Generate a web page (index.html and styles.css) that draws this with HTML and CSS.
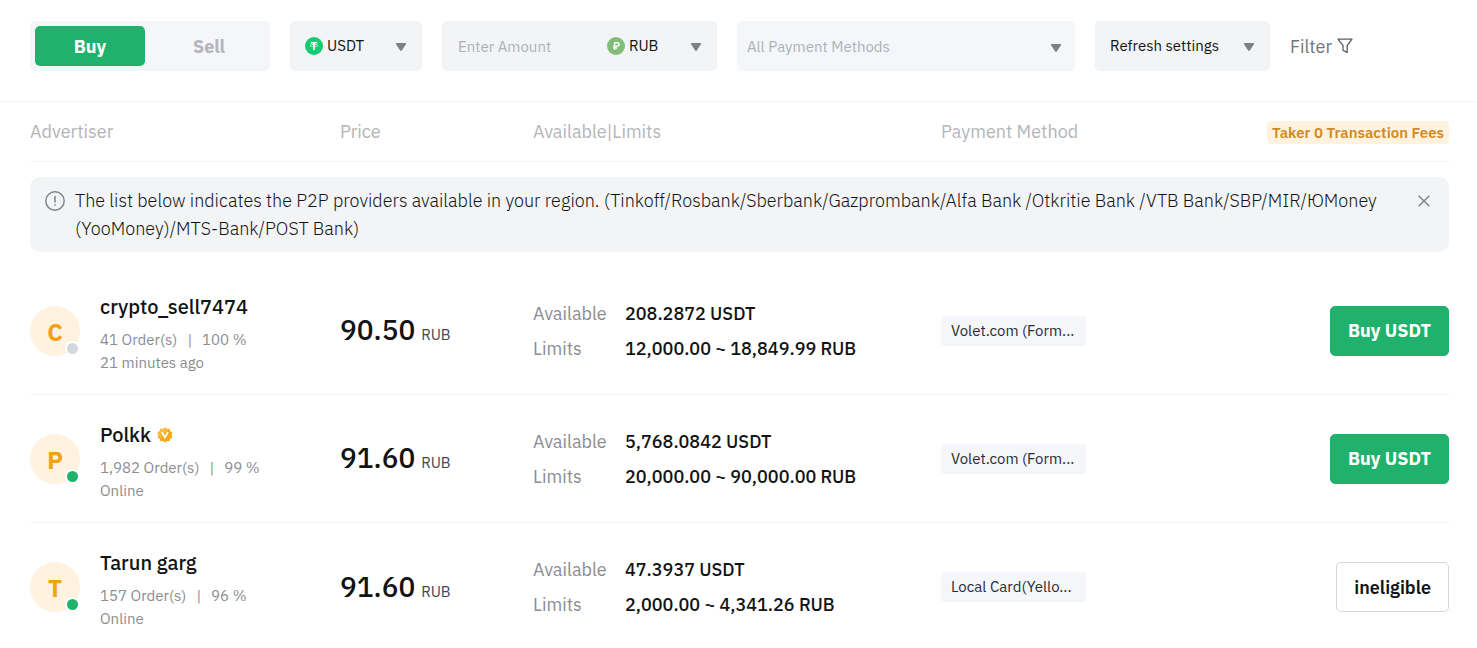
FILE: index.html
```html
<!DOCTYPE html>
<html lang="en">
<head>
<meta charset="utf-8">
<meta name="viewport" content="width=device-width, initial-scale=1">
<title>P2P Trading</title>
<link rel="stylesheet" href="styles.css">
</head>
<body>
<svg class="defs" aria-hidden="true">
  <symbol id="caret" viewBox="0 0 12 10"><path d="M1.8 1h8.4q1.400 0 .7 1.200L7 8.200q-1 1.400-2 0L1.100 2.200Q.4 1 1.800 1z" fill="#7d8187"/></symbol>
</svg>
<form class="toolbar">
  <div class="tabs">
    <button type="button" class="tab tab-active">Buy</button>
    <button type="button" class="tab">Sell</button>
  </div>
  <div class="field coin">
    <select class="picker has-icon" aria-label="Coin"><option>USDT</option></select>
    <svg class="coin-icon" viewBox="0 0 18 18" aria-hidden="true"><circle cx="9" cy="9" r="9" fill="#15cc73"/><path d="M5.800 5h6.400v1.500H9.800v6.500H8.200V6.500H5.800z" fill="#fff"/><ellipse cx="9" cy="8.500" rx="4" ry="1.100" fill="none" stroke="#fff" stroke-width=".6"/></svg>
    <svg class="caret"><use href="#caret"/></svg>
  </div>
  <div class="field amount">
    <input class="amount-input" type="text" placeholder="Enter Amount" aria-label="Amount">
    <div class="currency">
      <select class="picker has-icon" aria-label="Currency"><option>RUB</option></select>
      <svg class="coin-icon" viewBox="0 0 18 18" aria-hidden="true"><circle cx="9" cy="9" r="9" fill="#81bd79"/><path d="M7.600 13V5.700h2.500q1.900 0 1.900 1.700t-1.900 1.700H6.200M6.200 11h3.900" fill="none" stroke="#fff" stroke-width="1.400"/></svg>
      <svg class="caret"><use href="#caret"/></svg>
    </div>
  </div>
  <div class="field methods">
    <select class="picker muted" aria-label="Payment methods"><option>All Payment Methods</option></select>
    <svg class="caret"><use href="#caret"/></svg>
  </div>
  <div class="field refresh">
    <select class="picker" aria-label="Refresh settings"><option>Refresh settings</option></select>
    <svg class="caret"><use href="#caret"/></svg>
  </div>
  <button type="button" class="filter">Filter
    <svg class="filter-icon" viewBox="0 0 16 16" aria-hidden="true"><path d="M1 1.200h14L10.200 7.500v7L6 12.300V7.500z" fill="none" stroke="#5c5f64" stroke-width="1.300" stroke-linejoin="round"/></svg>
  </button>
</form>
<main class="listing">
  <table class="ads">
    <colgroup><col class="c-adv"><col class="c-price"><col class="c-limits"><col class="c-pay"><col></colgroup>
    <thead>
      <tr><th>Advertiser</th><th>Price</th><th>Available|Limits</th><th>Payment Method</th><th class="end"><span class="fee">Taker 0 Transaction Fees</span></th></tr>
    </thead>
    <tbody>
      <tr><td colspan="5">
        <div class="notice">
          <svg class="info" viewBox="0 0 20 20" aria-hidden="true"><circle cx="10" cy="10" r="9.200" fill="none" stroke="#7d8187" stroke-width="1.400"/><path d="M10 5v6.500M10 13.200v1.600" stroke="#7d8187" stroke-width="1.500"/></svg>
          <p class="notice-text">The list below indicates the P2P providers available in your region. (Tinkoff/Rosbank/Sberbank/Gazprombank/Alfa Bank /Otkritie Bank /VTB Bank/SBP/MIR/ЮMoney (YooMoney)/MTS-Bank/POST Bank)</p>
          <button type="button" class="close" aria-label="Close"><svg class="close-icon" viewBox="0 0 12 12"><path d="M.7.700l10.600 10.600M11.300.700L.700 11.300" stroke="#7d8187" stroke-width="1.400"/></svg></button>
        </div>
      </td></tr>
      <tr class="ad">
        <td><div class="adv"><div class="avatar">C<span class="dot"></span></div><div class="who"><div class="name">crypto_sell7474</div><div class="stats"><span>41 Order(s)</span><span>|</span><span>100 %</span></div><div class="seen">21 minutes ago</div></div></div></td>
        <td><div class="rate"><span class="price">90.50</span><span class="unit">RUB</span></div></td>
        <td><dl class="limits"><dt>Available</dt><dd>208.2872 USDT</dd><dt>Limits</dt><dd>12,000.00 ~ 18,849.99 RUB</dd></dl></td>
        <td><span class="chip">Volet.com (Form...</span></td>
        <td class="end"><button type="button" class="action buy">Buy USDT</button></td>
      </tr>
      <tr class="ad">
        <td><div class="adv"><div class="avatar">P<span class="dot online"></span></div><div class="who"><div class="name">Polkk <svg class="badge" viewBox="0 0 16 16" aria-label="Verified"><path d="M8 .400l2 1.500 2.600-.2.700 2.500 2.200 1.300L14.600 8l.9 2.500-2.200 1.300-.7 2.500-2.600-.2-2 1.500-2-1.500-2.600.2-.7-2.500L.500 10.500 1.400 8 .500 5.500l2.200-1.300.7-2.500 2.600.2z" fill="#f3a91b"/><path d="M8 .400l2 1.500 2.600-.2L2.700 11.800.500 10.500 1.400 8 .500 5.500l2.200-1.300.7-2.500 2.600.2z" fill="#f9b844"/><path d="M4.900 5.300L7.900 10.300 11 5.300" fill="none" stroke="#fff" stroke-width="1.700"/></svg></div><div class="stats"><span>1,982 Order(s)</span><span>|</span><span>99 %</span></div><div class="seen">Online</div></div></div></td>
        <td><div class="rate"><span class="price">91.60</span><span class="unit">RUB</span></div></td>
        <td><dl class="limits"><dt>Available</dt><dd>5,768.0842 USDT</dd><dt>Limits</dt><dd>20,000.00 ~ 90,000.00 RUB</dd></dl></td>
        <td><span class="chip">Volet.com (Form...</span></td>
        <td class="end"><button type="button" class="action buy">Buy USDT</button></td>
      </tr>
      <tr class="ad">
        <td><div class="adv"><div class="avatar">T<span class="dot online"></span></div><div class="who"><div class="name">Tarun garg</div><div class="stats"><span>157 Order(s)</span><span>|</span><span>96 %</span></div><div class="seen">Online</div></div></div></td>
        <td><div class="rate"><span class="price">91.60</span><span class="unit">RUB</span></div></td>
        <td><dl class="limits"><dt>Available</dt><dd>47.3937 USDT</dd><dt>Limits</dt><dd>2,000.00 ~ 4,341.26 RUB</dd></dl></td>
        <td><span class="chip">Local Card(Yello...</span></td>
        <td class="end"><button type="button" class="action">ineligible</button></td>
      </tr>
    </tbody>
  </table>
</main>
</body>
</html>
```
FILE: styles.css
```css
* { box-sizing: border-box; }
body { margin: 0; background: #fff; color: #121314; font-family: "IBM Plex Sans", Roboto, "Noto Sans", sans-serif; font-size: 15px; }
button, input, select { font: inherit; color: inherit; border: 0; background: none; margin: 0; padding: 0; }
.defs { position: absolute; width: 0; height: 0; }
.toolbar { display: flex; align-items: center; gap: 20px; padding: 21px 28px 30px 30px; border-bottom: 1px solid #f3f4f6; }
.tabs { display: flex; width: 240px; height: 50px; padding: 5px; border-radius: 5px; background: #f5f6fa; }
.tab { width: 110px; border-radius: 5px; font-size: 18px; font-weight: 700; color: #b3b5ba; }
.tab + .tab { flex: 1; padding-left: 8px; }
.tab-active { background: #20b26c; color: #fff; }
.field { height: 50px; border-radius: 5px; background: #f3f4f6; }
.coin, .currency, .methods, .refresh { display: grid; grid-template-columns: 1fr auto; align-items: center; }
.coin > *, .currency > *, .methods > *, .refresh > * { grid-row: 1; }
.coin { width: 132px; }
.amount { display: flex; width: 275px; }
.amount-input { flex: 1; min-width: 0; padding-left: 16px; }
.amount-input::placeholder { color: #adb1b8; opacity: 1; }
.currency { width: 125px; }
.methods { flex: 0 1 338px; background: #f5f6fa; }
.refresh { width: 175px; }
.picker { grid-column: 1 / 3; width: 100%; height: 50px; padding: 0 30px 2px 15px; appearance: none; }
.has-icon { padding-left: 37px; }
.muted { padding: 0 30px 0 10px; color: #adb1b8; }
.coin-icon { grid-column: 1; width: 18px; height: 18px; margin-left: 15px; pointer-events: none; }
.caret { grid-column: 2; width: 12px; height: 10px; margin-right: 15px; margin-top: 2px; pointer-events: none; }
.methods .caret { margin-right: 13px; margin-top: 4px; }
.filter { display: flex; align-items: center; gap: 5px; font-size: 18px; color: #71757a; }
.filter-icon { width: 16px; height: 16px; }
.listing { padding: 0 28px 0 30px; }
.ads { width: 100%; border-collapse: separate; border-spacing: 0; table-layout: fixed; }
.ads th, .ads td { padding: 0; text-align: left; vertical-align: middle; }
.ads .end { text-align: right; }
.c-adv { width: 310px; }
.c-price { width: 193px; }
.c-limits { width: 408px; }
.c-pay { width: 200px; }
.ads th { height: 60px; border-bottom: 1px solid #f3f4f6; font-size: 18px; font-weight: 400; color: #b3b5ba; }
.fee { display: inline-block; padding: 0 5px; border-radius: 4px; background: #fff2df; color: #d18a1f; font-size: 15px; font-weight: 600; line-height: 23px; }
.notice { display: flex; align-items: flex-start; margin: 15px 0; padding: 10px 15px 9px; border-radius: 10px; background: #f3f4f6; }
.info { flex: none; width: 20px; height: 20px; margin: 4px 10px 0 0; }
.notice-text { flex: 1; margin: 0; font-size: 18px; font-weight: 300; line-height: 28px; }
.close { flex: none; width: 56px; height: 28px; padding-right: 4px; text-align: right; }
.close-icon { width: 12px; height: 12px; }
.ads .ad td { height: 128px; border-bottom: 1px solid #f3f4f6; }
.ads .ad:last-child td { border-bottom: 0; }
.adv { display: flex; align-items: center; gap: 20px; }
.avatar { position: relative; width: 50px; height: 50px; border-radius: 50%; background: #fff2df; color: #f0a30f; font-size: 24px; font-weight: 700; line-height: 52px; text-align: center; }
.dot { position: absolute; right: 0; bottom: 0; width: 15px; height: 15px; border: 2px solid #fff; border-radius: 50%; background: #d3d7de; }
.online { background: #20b26c; }
.who { padding-top: 5px; }
.name { display: flex; align-items: center; gap: 6px; font-size: 20px; font-weight: 500; line-height: 28px; }
.badge { width: 16px; height: 16px; }
.stats { display: flex; gap: 10px; margin-top: 7px; }
.stats, .seen { font-size: 15px; line-height: 23px; color: #8a8d93; }
.rate { display: flex; align-items: baseline; gap: 6px; padding-top: 4px; line-height: 36px; }
.price { font-size: 28px; font-weight: 500; }
.unit { font-size: 15px; color: #44474c; }
.limits { display: grid; grid-template-columns: 92px 1fr; row-gap: 11px; margin: 0; padding-top: 1px; font-size: 18px; line-height: 24px; }
.limits dt { color: #8a8d93; }
.limits dd { margin: 0; font-weight: 500; }
.chip { display: inline-block; width: 145px; padding: 0 10px; border-radius: 4px; background: #f5f6fa; color: #2b2d30; font-size: 15px; line-height: 30px; white-space: nowrap; }
.action { height: 50px; padding: 0 17px; border: 1px solid #d4d6da; border-radius: 5px; font-size: 18px; font-weight: 600; }
.buy { border-color: #20b26c; background: #20b26c; color: #fff; font-weight: 700; }
```
